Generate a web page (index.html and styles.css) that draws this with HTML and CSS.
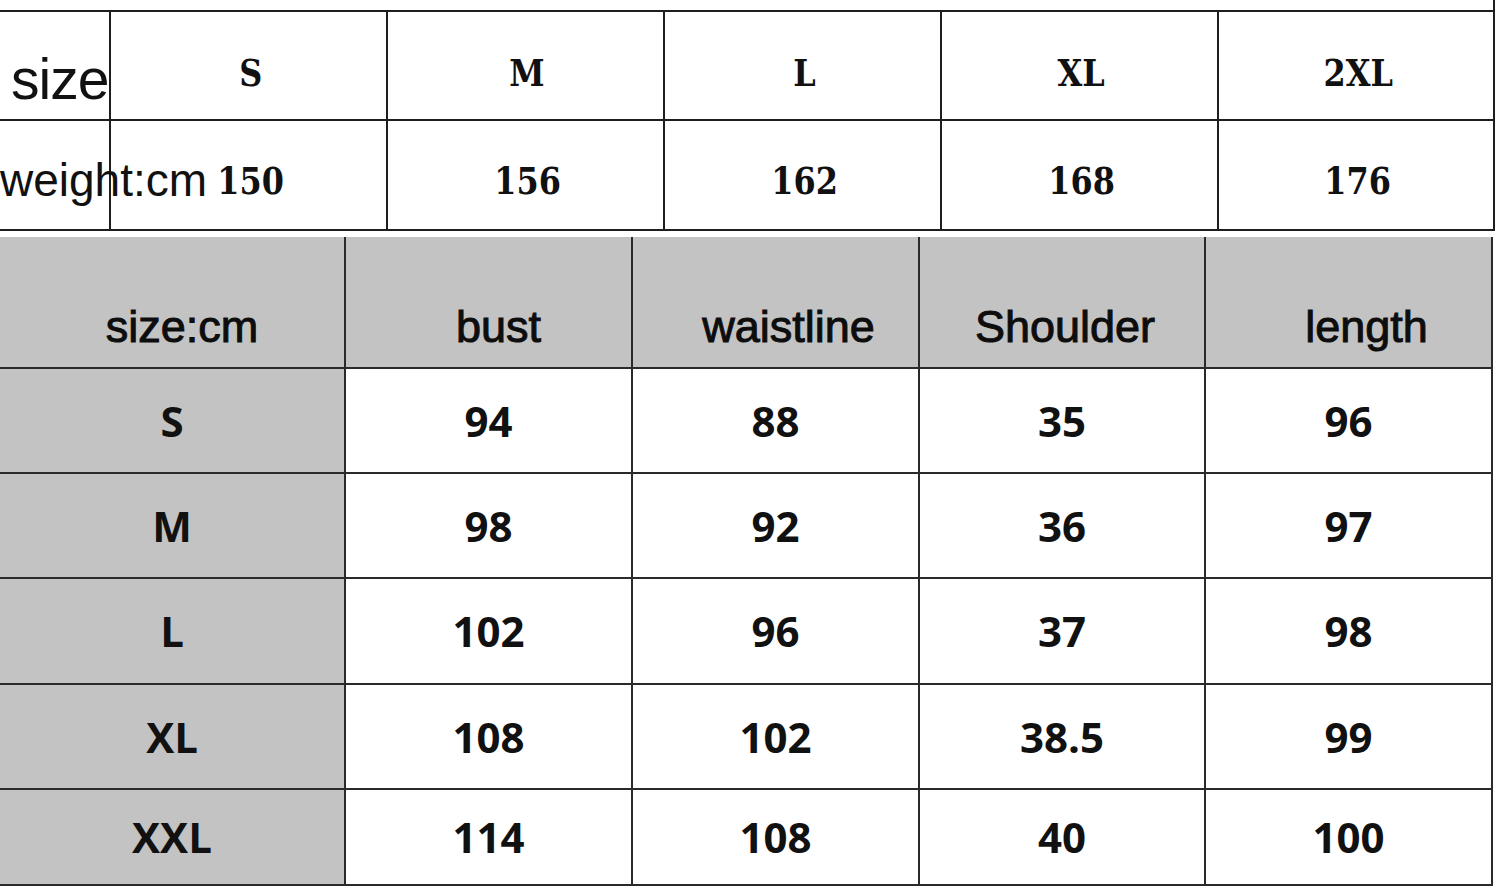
FILE: index.html
```html
<!DOCTYPE html>
<html lang="en">
<head>
<meta charset="utf-8">
<title>Size chart</title>
<link rel="stylesheet" href="styles.css">
</head>
<body>
<div class="sheet">
  <div class="height-grid">
    <div class="cell label label-size">size</div>
    <div class="cell serif"><span class="narrow">S</span></div>
    <div class="cell serif"><span class="narrow">M</span></div>
    <div class="cell serif"><span class="narrow">L</span></div>
    <div class="cell serif"><span class="narrow">XL</span></div>
    <div class="cell serif"><span class="narrow">2XL</span></div>
    <div class="cell label label-weight">weight:cm</div>
    <div class="cell serif num"><span class="narrow">150</span></div>
    <div class="cell serif num"><span class="narrow">156</span></div>
    <div class="cell serif num"><span class="narrow">162</span></div>
    <div class="cell serif num"><span class="narrow">168</span></div>
    <div class="cell serif num"><span class="narrow">176</span></div>
  </div>

  <div class="measure-grid">
    <div class="cell head gray">size:cm</div>
    <div class="cell head gray">bust</div>
    <div class="cell head gray head-waist">waistline</div>
    <div class="cell head gray head-shoulder">Shoulder</div>
    <div class="cell head gray head-length">length</div>

    <div class="cell val gray">S</div>
    <div class="cell val">94</div>
    <div class="cell val">88</div>
    <div class="cell val">35</div>
    <div class="cell val">96</div>

    <div class="cell val gray">M</div>
    <div class="cell val">98</div>
    <div class="cell val">92</div>
    <div class="cell val">36</div>
    <div class="cell val">97</div>

    <div class="cell val gray">L</div>
    <div class="cell val">102</div>
    <div class="cell val">96</div>
    <div class="cell val">37</div>
    <div class="cell val">98</div>

    <div class="cell val gray">XL</div>
    <div class="cell val">108</div>
    <div class="cell val">102</div>
    <div class="cell val">38.5</div>
    <div class="cell val">99</div>

    <div class="cell val gray">XXL</div>
    <div class="cell val">114</div>
    <div class="cell val">108</div>
    <div class="cell val">40</div>
    <div class="cell val">100</div>
  </div>
</div>
</body>
</html>
```

FILE: styles.css
```css
html, body {
  margin: 0;
  padding: 0;
  background: #ffffff;
}

.sheet {
  width: 1500px;
  height: 893px;
  overflow: hidden;
  background: #ffffff;
}

/* ---------- top table (height chart) ---------- */
.height-grid {
  position: relative;
  display: grid;
  grid-template-columns: 109px 275px 275px 275px 275px 274px;
  grid-template-rows: 107px 108px;
  gap: 2px;
  width: max-content;
  margin-top: 10px;
  background: #1e1e1e;
  border-top: 2px solid #1e1e1e;
  border-bottom: 2px solid #1e1e1e;
  border-right: 2px solid #1e1e1e;
}

/* the right rule runs on above the top border, as in the source sheet */
.height-grid::after {
  content: "";
  position: absolute;
  right: -2px;
  top: -12px;
  width: 2px;
  height: 12px;
  background: #1e1e1e;
}

.cell {
  background: #ffffff;
  color: #111111;
  display: flex;
  justify-content: center;
  align-items: flex-start;
  box-sizing: border-box;
  white-space: nowrap;
}

.label {
  font-family: "Liberation Sans", Arial, sans-serif;
  justify-content: flex-start;
  z-index: 1;
}

.label-size {
  font-size: 57px;
  line-height: 64px;
  letter-spacing: -1px;
  padding-top: 35px;
  padding-left: 11px;
}

.label-weight {
  font-size: 46px;
  line-height: 52px;
  padding-top: 33px;
  padding-left: 0;
}

.serif {
  font-family: "DejaVu Serif", "Liberation Serif", serif;
  font-weight: 700;
  font-size: 38px;
  line-height: 40px;
  padding-top: 41px;
  padding-left: 4px;
}

.serif.num {
  padding-top: 40px;
}

.narrow {
  display: inline-block;
  transform: scaleX(0.84);
}

/* ---------- bottom table (measurements) ---------- */
.measure-grid {
  display: grid;
  grid-template-columns: 344px 285px 285px 284px 285px;
  grid-template-rows: 130px 103px 103px 104px 103px 94px;
  gap: 2px;
  width: max-content;
  margin-top: 6px;
  background: #2a2a2a;
  border-right: 2px solid #2a2a2a;
  border-bottom: 2px solid #2a2a2a;
}

.gray {
  background: #c3c3c3;
}

.head {
  font-family: "Liberation Sans", Arial, sans-serif;
  font-size: 45px;
  line-height: 50px;
  align-items: flex-end;
  padding-bottom: 15px;
  padding-left: 20px;
  color: #0d0d0d;
  -webkit-text-stroke: 1px #0d0d0d;
}

.head-waist {
  padding-left: 26px;
}

.head-shoulder {
  padding-left: 6px;
}

.head-length {
  padding-left: 36px;
}

.val {
  font-family: "Open Sans", "Noto Sans", sans-serif;
  font-weight: 700;
  font-size: 42px;
  line-height: 50px;
  align-items: center;
  color: #111111;
}
```
